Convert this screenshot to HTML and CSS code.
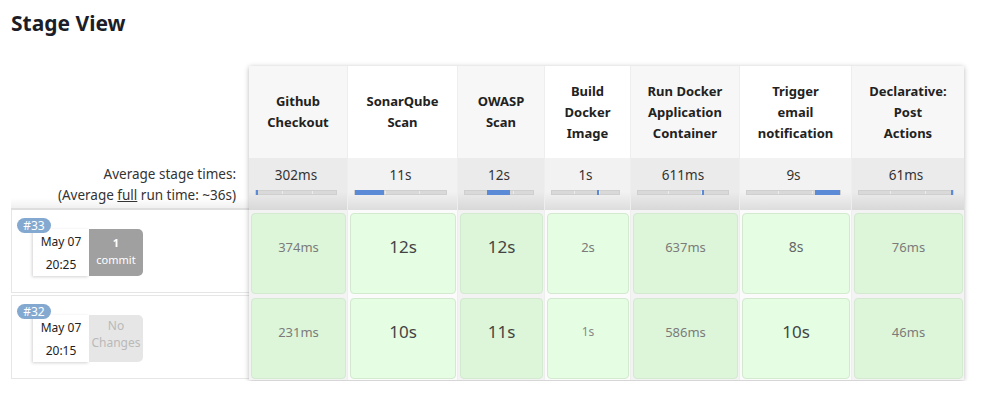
FILE: index.html
```html
<!DOCTYPE html>
<html>
<head>
<meta charset="utf-8">
<link rel="stylesheet" href="styles.css">
</head>
<body>
<div class="page">
  <h2 class="title">Stage View</h2>
  <div class="view">
    <div class="builds">
      <div class="builds-head"></div>
      <div class="builds-avg">
        <div>Average stage times:</div>
        <div>(Average <span class="u">full</span> run time: ~36s)</div>
      </div>
      <div class="build-row">
        <div class="build-info">
          <span class="badge">#33</span>
          <div class="date"><div>May 07</div><div>20:25</div></div>
          <div class="changes has"><div class="num">1</div><div>commit</div></div>
        </div>
      </div>
      <div class="build-row">
        <div class="build-info">
          <span class="badge">#32</span>
          <div class="date"><div>May 07</div><div>20:15</div></div>
          <div class="changes none"><div>No</div><div>Changes</div></div>
        </div>
      </div>
    </div>

    <div class="stages">
      <div class="col alt" style="width:98px">
        <div class="head">Github<br>Checkout</div>
        <div class="avg"><div class="avg-time">302ms</div><div class="bar"><i class="d1"></i><i class="d2"></i><b style="left:0%;width:2%"></b></div></div>
        <div class="cell-wrap"><div class="cell s13">374ms</div></div>
        <div class="cell-wrap"><div class="cell s13">231ms</div></div>
      </div>
      <div class="col" style="width:110px">
        <div class="head">SonarQube<br>Scan</div>
        <div class="avg"><div class="avg-time">11s</div><div class="bar"><i class="d1"></i><i class="d2"></i><b style="left:0%;width:32%"></b></div></div>
        <div class="cell-wrap"><div class="cell s16">12s</div></div>
        <div class="cell-wrap"><div class="cell s16">10s</div></div>
      </div>
      <div class="col alt" style="width:87px">
        <div class="head">OWASP<br>Scan</div>
        <div class="avg"><div class="avg-time">12s</div><div class="bar"><i class="d1"></i><i class="d2"></i><b style="left:33%;width:33%"></b></div></div>
        <div class="cell-wrap"><div class="cell s16">12s</div></div>
        <div class="cell-wrap"><div class="cell s16">11s</div></div>
      </div>
      <div class="col" style="width:86px">
        <div class="head">Build<br>Docker<br>Image</div>
        <div class="avg"><div class="avg-time">1s</div><div class="bar"><i class="d1"></i><i class="d2"></i><b style="left:67%;width:3%"></b></div></div>
        <div class="cell-wrap"><div class="cell s13">2s</div></div>
        <div class="cell-wrap"><div class="cell s12">1s</div></div>
      </div>
      <div class="col alt" style="width:109px">
        <div class="head">Run Docker<br>Application<br>Container</div>
        <div class="avg"><div class="avg-time">611ms</div><div class="bar"><i class="d1"></i><i class="d2"></i><b style="left:71%;width:2%"></b></div></div>
        <div class="cell-wrap"><div class="cell s13">637ms</div></div>
        <div class="cell-wrap"><div class="cell s13">586ms</div></div>
      </div>
      <div class="col" style="width:112px">
        <div class="head">Trigger<br>email<br>notification</div>
        <div class="avg"><div class="avg-time">9s</div><div class="bar"><i class="d1"></i><i class="d2"></i><b style="left:73%;width:27%"></b></div></div>
        <div class="cell-wrap"><div class="cell s14">8s</div></div>
        <div class="cell-wrap"><div class="cell s16">10s</div></div>
      </div>
      <div class="col alt" style="width:113px">
        <div class="head">Declarative:<br>Post<br>Actions</div>
        <div class="avg"><div class="avg-time">61ms</div><div class="bar"><i class="d1"></i><i class="d2"></i><b style="left:98%;width:2%"></b></div></div>
        <div class="cell-wrap"><div class="cell s13">76ms</div></div>
        <div class="cell-wrap"><div class="cell s13">46ms</div></div>
      </div>
    </div>
  </div>
</div>
</body>
</html>
```

FILE: styles.css
```css
* { box-sizing: border-box; }
html, body { margin: 0; padding: 0; background: #fff; }
body {
  font-family: "Noto Sans", "Open Sans", sans-serif;
  color: #333;
  font-size: 13px;
}
.page { padding: 0 0 0 11px; }
.title {
  margin: 0;
  padding-top: 9px;
  font-size: 21px;
  line-height: 28px;
  font-weight: 700;
  color: #1d1d28;
}
.view {
  margin-top: 29px;
  display: flex;
  align-items: flex-start;
}
.builds { width: 238px; flex: none; }
.builds-head { height: 92px; }
.builds-avg {
  height: 52px;
  padding: 6px 13px 0 0;
  text-align: right;
  font-size: 13.5px;
  line-height: 21px;
  color: #333;
  background: linear-gradient(to bottom, #fff 0%, #fff 80%, #f0f0f0 100%);
  border-bottom: 2px solid #dedede;
}
.u { text-decoration: underline; }
.build-row {
  height: 83px;
  margin-bottom: 2px;
  border: 1px solid #e6e6e6;
  border-right: none;
  border-top: none;
}
.build-row + .build-row { border-top: 1px solid #e6e6e6; height: 84px; }
.build-info {
  position: relative;
  display: flex;
  padding: 19px 0 0 21px;
}
.badge {
  position: absolute;
  left: 5px;
  top: 8px;
  width: 34px;
  height: 15px;
  border-radius: 8px;
  background: #84a9d1;
  color: #fff;
  font-size: 12px;
  line-height: 15px;
  text-align: center;
  z-index: 2;
}
.date {
  width: 56px;
  height: 47px;
  background: #fff;
  box-shadow: -1px 1px 3px rgba(0,0,0,0.18);
  text-align: center;
  font-size: 12px;
  line-height: 23px;
  color: #222;
  padding-top: 1px;
}
.changes {
  width: 54px;
  height: 47px;
  border-radius: 0 5px 5px 0;
  text-align: center;
  font-size: 11px;
  line-height: 17px;
  padding-top: 5px;
}
.changes.has { background: #a0a0a0; color: #fff; }
.changes .num { font-weight: 700; }
.changes.none { background: #e6e6e6; color: #b9b9b9; padding-top: 2px; font-size: 12px; }

.stages {
  display: flex;
  box-shadow: 0 1px 5px rgba(0,0,0,0.28);
  background: #fff;
}
.col { flex: none; background: #fbfbfb; }
.col.alt { background: #f3f3f3; }
.col + .col { border-left: 1px solid #eeeeee; }
.head {
  height: 92px;
  display: flex;
  align-items: center;
  justify-content: center;
  text-align: center;
  font-weight: 700;
  font-size: 13px;
  line-height: 21px;
  color: #222;
  background: #fff;
}
.col.alt .head { background: #f7f7f7; }
.avg {
  height: 52px;
  padding: 8px 10px 0 6px;
  background: linear-gradient(to bottom, #f2f2f2 0%, #f2f2f2 65%, #dddddd 100%);
}
.col.alt .avg { background: linear-gradient(to bottom, #ebebeb 0%, #ebebeb 65%, #d8d8d8 100%); }
.avg-time {
  text-align: center;
  font-size: 13.5px;
  line-height: 19px;
  color: #333;
}
.bar {
  position: relative;
  margin-top: 5px;
  height: 5px;
  background: #d9d9d9;
  border: 1px solid #cfcfcf;
}
.bar i {
  position: absolute;
  top: 0;
  bottom: 0;
  width: 1px;
  background: #ececec;
}
.bar .d1 { left: 33%; }
.bar .d2 { left: 70%; }
.bar b {
  position: absolute;
  top: -1px;
  bottom: -1px;
  background: #5b8ad6;
  min-width: 1px;
}
.cell-wrap { height: 85px; padding: 3px 1px 1px 2px; }
.cell {
  height: 81px;
  border: 1px solid #d3e9d0;
  border-radius: 4px;
  background: #e5fde3;
  text-align: center;
  padding-top: 22px;
  line-height: 22px;
  color: #7b7b7b;
}
.col.alt .cell { background: #ddf6da; }
.s12 { font-size: 12px; color: #888; }
.s13 { font-size: 13px; color: #7b7b7b; }
.s14 { font-size: 14px; color: #666; }
.s16 { font-size: 17px; color: #444; }
```
